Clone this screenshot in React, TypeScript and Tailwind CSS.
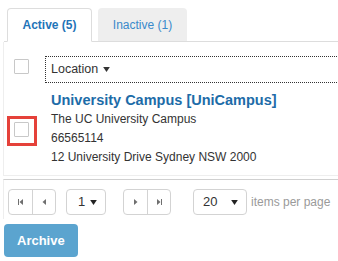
import React from 'react';

const Caret = ({ className = '' }: { className?: string }) => (
  <svg viewBox="0 0 8 6" className={className} fill="currentColor">
    <path d="M0 0h8L4 6z" />
  </svg>
);

const Checkbox = () => (
  <div className="w-[15px] h-[15px] border border-[#c8c8c8] bg-white rounded-[1px]" />
);

const PagerIcon = ({ kind }: { kind: 'first' | 'prev' | 'next' | 'last' }) => {
  const paths: Record<string, string> = {
    first: 'M1 0h1v6H1zM6 0v6L2.5 3z',
    prev: 'M6 0v6L2.5 3z',
    next: 'M2 0v6l3.5-3z',
    last: 'M2 0v6l3.5-3zM6 0h1v6H6z',
  };
  return (
    <svg viewBox="0 0 8 6" className="w-[8px] h-[6px] text-[#6f6f6f]" fill="currentColor">
      <path d={paths[kind]} />
    </svg>
  );
};

const PagerGroup = ({ left, right }: { left: 'first' | 'next'; right: 'prev' | 'last' }) => (
  <div className="flex h-[26px] w-[48px] border border-[#d3d3d3] rounded-[4px] bg-white">
    <button className="w-[24px] flex items-center justify-center border-r border-[#d3d3d3]">
      <PagerIcon kind={left} />
    </button>
    <button className="flex-1 flex items-center justify-center">
      <PagerIcon kind={right} />
    </button>
  </div>
);

export default function App() {
  return (
    <div className="w-[338px] h-[261px] overflow-hidden bg-white text-[#333] font-['Liberation_Sans',Arial,sans-serif]">
      {/* Tabs */}
      <div className="ml-[4px] pl-[3px] pt-[8px] h-[42px] flex items-end border-b border-[#dddddd]">
        <div className="relative -mb-px h-[34px] w-[85px] flex items-center justify-center bg-white border border-[#dddddd] border-b-white rounded-t-[4px] text-[12px] font-bold text-[#1f74b8]">
          Active (5)
        </div>
        <div className="ml-[6px] h-[33px] w-[89px] flex items-center justify-center bg-[#eeeeee] rounded-t-[4px] text-[12px] text-[#3a8acb]">
          Inactive (1)
        </div>
      </div>

      {/* Grid */}
      <div className="ml-[3px] border-l border-b border-[#eeeeee] pt-[14px]">
        <div className="flex h-[27px]">
          <div className="w-[41px] shrink-0 pl-[10px] pt-[3px]">
            <Checkbox />
          </div>
          <div className="w-[400px] shrink-0 border border-dotted border-[#333] flex items-center pl-[5px] text-[12.5px]">
            Location
            <Caret className="ml-[5px] w-[7px] h-[5px] text-[#333]" />
          </div>
        </div>

        <div className="flex items-center pt-[8px] pb-[8px]">
          <div className="w-[41px] shrink-0 pl-[10px]">
            <div className="relative">
              <Checkbox />
              <div className="absolute -left-[7px] -top-[6px] w-[30px] h-[30px] border-[3px] border-[#e5413a]" />
            </div>
          </div>
          <div className="pl-[6px] text-[12px] leading-[19px]">
            <div className="text-[14.5px] font-bold text-[#1d6ca8]">University Campus [UniCampus]</div>
            <div>The UC University Campus</div>
            <div>66565114</div>
            <div>12 University Drive Sydney NSW 2000</div>
          </div>
        </div>
      </div>

      {/* Pager */}
      <div className="mt-[3px] ml-[3px] border-l border-[#eeeeee] border-t border-t-[#d0d0d0] pt-[9px] pb-[4px] pl-[4px] flex items-center">
        <PagerGroup left="first" right="prev" />
        <div className="ml-[10px] h-[26px] w-[40px] border border-[#d3d3d3] rounded-[4px] flex items-center pl-[11px] text-[13px]">
          1
          <Caret className="ml-[5px] w-[7px] h-[5px] text-[#222]" />
        </div>
        <div className="ml-[17px]">
          <PagerGroup left="next" right="last" />
        </div>
        <div className="ml-[22px] h-[26px] w-[54px] border border-[#d3d3d3] rounded-[4px] flex items-center pl-[9px] text-[13px]">
          20
          <Caret className="ml-[14px] w-[7px] h-[5px] text-[#222]" />
        </div>
        <span className="ml-[4px] text-[12px] text-[#9a9a9a] whitespace-nowrap">items per page</span>
      </div>

      <button className="mt-[5px] ml-[4px] h-[33px] px-[13px] rounded-[4px] bg-[#5ba4cf] text-white text-[13px] font-bold">
        Archive
      </button>
    </div>
  );
}
